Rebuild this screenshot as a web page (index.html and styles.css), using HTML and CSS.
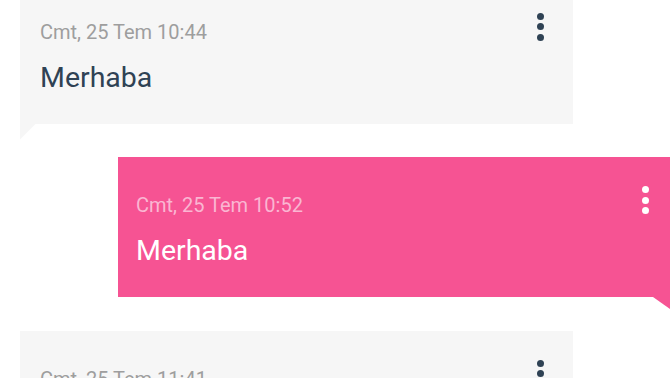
FILE: index.html
```html
<!DOCTYPE html>
<html lang="tr">
<head>
    <meta charset="UTF-8">
    <meta name="viewport" content="width=device-width, initial-scale=1.0">
    <title>Mesajlar</title>
    <link rel="stylesheet" href="styles.css">
</head>
<body>
    <div class="chat">
        <div class="msg incoming">
            <div class="time">Cmt, 25 Tem 10:44</div>
            <div class="text">Merhaba</div>
            <button class="menu"><span></span><span></span><span></span></button>
        </div>
        <div class="msg outgoing">
            <div class="time">Cmt, 25 Tem 10:52</div>
            <div class="text">Merhaba</div>
            <button class="menu"><span></span><span></span><span></span></button>
        </div>
        <div class="msg incoming">
            <div class="time">Cmt, 25 Tem 11:41</div>
            <div class="text">Merhaba</div>
            <button class="menu"><span></span><span></span><span></span></button>
        </div>
    </div>
</body>
</html>
```

FILE: styles.css
```css
body {
    font-family: 'Roboto', 'Liberation Sans', sans-serif;
    margin: 0;
    padding: 0;
    background: #ffffff;
    overflow: hidden;
}
.chat {
    display: flex;
    flex-direction: column;
    gap: 33.5px;
    margin-top: -16.5px;
}
.msg {
    position: relative;
    box-sizing: border-box;
    height: 140px;
    padding: 36px 19px 0 20px;
}
.msg::after {
    content: "";
    position: absolute;
    top: 100%;
}
.incoming {
    background: #f6f6f6;
    margin-left: 20px;
    width: 553px;
}
.incoming::after {
    left: 0;
    width: 16px;
    height: 16px;
    background: #f6f6f6;
    clip-path: polygon(0 0, 100% 0, 0 100%);
}
.outgoing {
    background: #f65393;
    margin-left: 118px;
    margin-right: 2px;
    padding-left: 18px;
}
.outgoing::after {
    right: 0;
    width: 17px;
    height: 12px;
    background: #f65393;
    clip-path: polygon(0 0, 100% 0, 100% 100%);
}
.time {
    font-size: 20px;
    line-height: 24px;
    color: #9e9e9e;
}
.text {
    margin-top: 17px;
    font-size: 28.5px;
    line-height: 34px;
    color: #2f4254;
}
.outgoing .time {
    color: #fab6d2;
}
.outgoing .text {
    color: #ffffff;
}
.menu {
    position: absolute;
    top: 29px;
    display: flex;
    flex-direction: column;
    gap: 3.5px;
    padding: 0;
    border: none;
    background: none;
}
.menu span {
    display: block;
    width: 7px;
    height: 7px;
    border-radius: 50%;
    background: #2f4254;
}
.incoming .menu {
    left: 517px;
}
.outgoing .menu {
    right: 21px;
}
.outgoing .menu span {
    background: #ffffff;
}
```
